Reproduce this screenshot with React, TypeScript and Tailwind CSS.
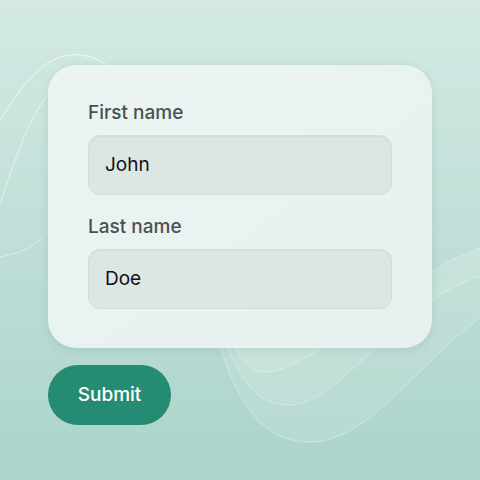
import React from "react";

const fields = [
  { label: "First name", value: "John" },
  { label: "Last name", value: "Doe" },
];

// top edge shared by the wave fills, runs from under the card to the right edge
const TOP_BACK = "L480 248 C455 262 430 290 400 330 Z";

function Waves() {
  return (
    <svg
      className="absolute inset-0 pointer-events-none"
      width="480"
      height="480"
      viewBox="0 0 480 480"
      fill="none"
    >
      {/* left side lines */}
      <path
        d="M0 120 C20 90 40 58 70 55 C90 53 105 62 115 72"
        stroke="rgba(255,255,255,0.7)"
        strokeWidth="1"
      />
      <path
        d="M0 205 C15 160 30 110 55 88"
        stroke="rgba(255,255,255,0.55)"
        strokeWidth="1"
      />
      <path
        d="M0 257 C18 254 30 248 42 238"
        stroke="rgba(255,255,255,0.45)"
        strokeWidth="1"
      />
      {/* bottom right waves */}
      <path
        d={"M215 330 C235 400 260 442 310 442 C370 442 420 360 480 318 " + TOP_BACK}
        fill="rgba(255,255,255,0.1)"
      />
      <path
        d={"M220 330 C240 380 255 405 290 405 C340 405 400 300 480 276 " + TOP_BACK}
        fill="rgba(255,255,255,0.1)"
      />
      <path
        d={"M225 330 C240 360 250 372 265 372 C300 372 360 320 420 280 C440 266 460 255 480 248 " + TOP_BACK}
        fill="rgba(255,255,255,0.12)"
      />
      <path
        d="M215 330 C235 400 260 442 310 442 C370 442 420 360 480 318"
        stroke="rgba(255,255,255,0.35)"
      />
      <path
        d="M220 330 C240 380 255 405 290 405 C340 405 400 300 480 276"
        stroke="rgba(255,255,255,0.35)"
      />
      <path
        d="M225 330 C240 360 250 372 265 372 C300 372 360 320 420 280 C440 266 460 255 480 248"
        stroke="rgba(255,255,255,0.35)"
      />
    </svg>
  );
}

export default function App() {
  return (
    <div
      className="relative w-[480px] h-[480px] overflow-hidden bg-gradient-to-b from-[#d4e9e4] to-[#abd4ca]"
      style={{ fontFamily: "Inter, 'Noto Sans', sans-serif" }}
    >
      <Waves />
      <div className="relative flex flex-col items-start pl-12 pt-[65px]">
        <div className="w-[384px] h-[283px] rounded-[28px] bg-gradient-to-br from-[#ebf4f2] to-[#e6f1ef] shadow-[0_2px_10px_rgba(40,90,80,0.12)] px-10 pt-9 flex flex-col">
          {fields.map(({ label, value }, i) => (
            <div key={label} className={i > 0 ? "mt-5" : ""}>
              <div className="text-[19px] leading-6 font-medium text-[#4b5150]">{label}</div>
              <div className="mt-[10px] h-[60px] w-full rounded-xl bg-[#dce6e3] border border-[#d3dedb] shadow-[inset_0_1px_2px_rgba(0,0,0,0.05)] flex items-center px-4 text-[19px] text-[#111]">
                {value}
              </div>
            </div>
          ))}
        </div>
        <button className="mt-[17px] h-[60px] w-[123px] rounded-full bg-[#258b73] text-white text-[19px] font-medium flex items-center justify-center">
          Submit
        </button>
      </div>
    </div>
  );
}
